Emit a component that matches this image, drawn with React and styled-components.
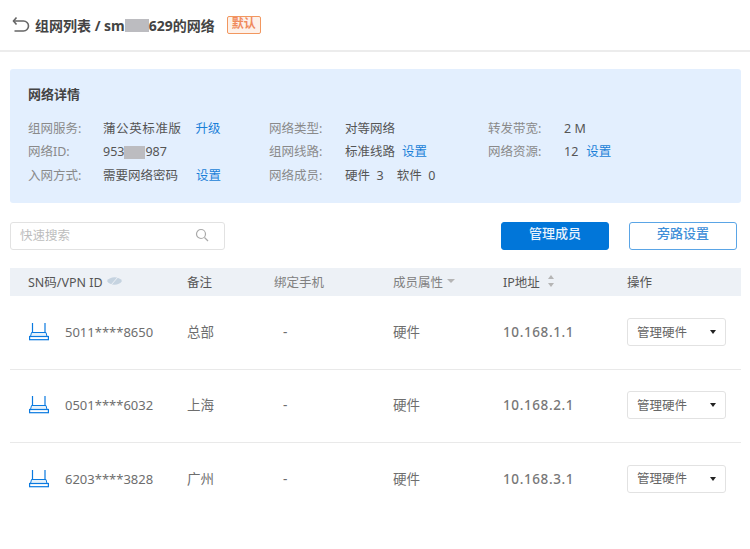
import React from "react";
import styled, { createGlobalStyle } from "styled-components";

const Global = createGlobalStyle`
  html, body {
    margin: 0;
    padding: 0;
    background: #fff;
  }
  body {
    font-family: "Noto Sans", "Noto Sans CJK SC", sans-serif;
    font-size: 13px;
    color: #666;
  }
`;

const Page = styled.div`
  width: 750px;
  height: 549px;
  overflow: hidden;
`;

const Header = styled.header`
  height: 50px;
  box-sizing: content-box;
  display: flex;
  align-items: center;
  padding-left: 12px;
  border-bottom: 2px solid #ececec;
`;

const BackButton = styled.svg`
  width: 18px;
  height: 18px;
  margin-right: 5px;
  margin-top: -2px;
`;

const Title = styled.h1`
  margin: 0;
  font-size: 14px;
  font-weight: 700;
  color: #444;
  display: flex;
  align-items: center;
`;

const Masked = styled.span`
  display: inline-block;
  width: ${(p) => p.$w}px;
  height: 13px;
  background: #bcbcc0;
`;

const Badge = styled.span`
  margin-left: 12px;
  padding: 0 4px;
  height: 16px;
  line-height: 14px;
  font-size: 12px;
  font-weight: 700;
  color: #f08a5d;
  background: #fdf1ea;
  border: 1px solid #f2975f;
  border-radius: 2px;
`;

const Panel = styled.section`
  margin: 17px 9px 0 10px;
  height: 134px;
  box-sizing: border-box;
  padding: 15px 18px 0;
  background: #e3effe;
  border-radius: 3px;
`;

const PanelTitle = styled.h2`
  margin: 0 0 13px;
  font-size: 13px;
  line-height: 20px;
  font-weight: 700;
  color: #444;
`;

const InfoGrid = styled.div`
  display: grid;
  grid-template-columns: 241px 219px 1fr;
  grid-auto-rows: 23.5px;
`;

const Info = styled.div`
  display: flex;
  align-items: center;
  line-height: 20px;
`;

const Label = styled.span`
  width: ${(p) => p.$w || 75}px;
  color: #8a8a8a;
  font-size: 12.5px;
  flex: none;
`;

const Value = styled.span`
  color: #555;
  font-size: 12.5px;
  display: flex;
  align-items: center;
  white-space: pre;
  letter-spacing: ${(p) => p.$spread || 0}px;
`;

const LinkText = styled.a`
  margin-left: ${(p) => p.$gap}px;
  color: #1a7fd8;
  font-size: 12.5px;
  letter-spacing: 0;
`;

const Toolbar = styled.div`
  display: flex;
  align-items: center;
  margin: 19px 13px 0 10px;
`;

const Search = styled.div`
  width: 215px;
  height: 28px;
  box-sizing: border-box;
  display: flex;
  align-items: center;
  justify-content: space-between;
  padding: 0 15px 3px 9px;
  border: 1px solid #e2e2e2;
  border-radius: 3px;
  color: #bdbdbd;
  font-size: 12.5px;
  margin-right: auto;
`;

const Button = styled.button`
  width: 108px;
  height: 28px;
  margin-left: 20px;
  padding: 0 0 7px;
  font-family: inherit;
  font-size: 13px;
  font-weight: 500;
  border-radius: 3px;
  border: ${(p) => (p.$primary ? "1px solid #0176d9" : "1.5px solid #5aa5e6")};
  color: ${(p) => (p.$primary ? "#e8f3fd" : "#3f8fd8")};
  background: ${(p) => (p.$primary ? "#0176d9" : "#fff")};
`;

const Table = styled.div`
  margin: 18px 9px 0 10px;
`;

const columns = "159px 87px 119px 110px 124px 1fr";

const HeadRow = styled.div`
  display: grid;
  grid-template-columns: ${columns};
  height: 26px;
  padding: 0 0 2px 18px;
  align-items: center;
  background: #edf1f6;
  color: #666;
  font-size: 12.5px;
`;

const HeadCell = styled.div`
  display: flex;
  align-items: center;
  gap: 4px;
  color: ${(p) => (p.$muted ? "#808080" : "#555")};
`;

const Rows = styled.div`
  padding-top: 1px;
`;

const Row = styled.div`
  display: grid;
  grid-template-columns: ${columns};
  height: 73px;
  box-sizing: border-box;
  padding: 0 0 2px 18px;
  align-items: center;
  border-bottom: ${(p) => (p.$last ? "none" : "1px solid #e9e9e9")};
  font-size: 13.5px;
  color: #6e6e6e;
`;

const SnCell = styled.div`
  display: flex;
  align-items: center;
  gap: 16px;
  font-size: 13px;
`;

const RouterSvg = styled.svg`
  margin-left: 1px;
  flex: none;
`;

const TextCell = styled.div`
  padding-bottom: 2px;
`;

const DashCell = styled.div`
  padding-left: 9px;
`;

const IpCell = styled.div`
  font-weight: 500;
  font-size: 13.5px;
  letter-spacing: 0.6px;
  color: #777;
`;

const Select = styled.div`
  width: 99px;
  height: 28px;
  box-sizing: border-box;
  display: flex;
  align-items: center;
  justify-content: space-between;
  padding: 0 9px 2px;
  border: 1px solid #e2e2e2;
  border-radius: 3px;
  background: #fff;
  font-size: 12.5px;
  color: #666;
`;

const Caret = styled.i`
  width: 0;
  height: 0;
  margin-top: 2px;
  border-left: 3px solid transparent;
  border-right: 3px solid transparent;
  border-top: 4px solid #222;
`;

const RouterIcon = () => (
  <RouterSvg width="20" height="18" viewBox="0 0 20 18" fill="none">
    <path d="M3.5 0v9.5M16 0v9.5" stroke="#0a7ae0" strokeWidth="1.2" />
    <path d="M2.5 9.5h14.5l1 4H1.5z" fill="#e6f2fb" stroke="#0a7ae0" strokeWidth="1" />
    <rect x="0.6" y="13.5" width="18.8" height="3.2" fill="#fff" stroke="#0a7ae0" strokeWidth="1.2" />
  </RouterSvg>
);

const rows = [
  { sn: "5011****8650", note: "总部", ip: "10.168.1.1" },
  { sn: "0501****6032", note: "上海", ip: "10.168.2.1" },
  { sn: "6203****3828", note: "广州", ip: "10.168.3.1" },
];

export default function App() {
  return (
    <Page>
      <Global />
      <Header>
        <BackButton viewBox="0 0 18 18" fill="none" stroke="#666" strokeWidth="1.6">
          <path d="M4.5 2.5 1.5 6l3 3.5" />
          <path d="M1.5 6H11.5a4.5 4.5 0 0 1 0 10H2.5" />
        </BackButton>
        <Title>
          组网列表 / sm<Masked $w={24} />629的网络
          <Badge>默认</Badge>
        </Title>
      </Header>

      <Panel>
        <PanelTitle>网络详情</PanelTitle>
        <InfoGrid>
          <Info>
            <Label>组网服务:</Label>
            <Value $spread={0.6}>蒲公英标准版<LinkText $gap={14}>升级</LinkText></Value>
          </Info>
          <Info>
            <Label $w={76}>网络类型:</Label>
            <Value>对等网络</Value>
          </Info>
          <Info>
            <Label $w={76}>转发带宽:</Label>
            <Value>2 M</Value>
          </Info>
          <Info>
            <Label>网络ID:</Label>
            <Value>953<Masked $w={21} />987</Value>
          </Info>
          <Info>
            <Label $w={76}>组网线路:</Label>
            <Value>标准线路<LinkText $gap={7}>设置</LinkText></Value>
          </Info>
          <Info>
            <Label $w={76}>网络资源:</Label>
            <Value>12<LinkText $gap={8}>设置</LinkText></Value>
          </Info>
          <Info>
            <Label>入网方式:</Label>
            <Value>需要网络密码<LinkText $gap={18}>设置</LinkText></Value>
          </Info>
          <Info>
            <Label $w={76}>网络成员:</Label>
            <Value>硬件  3    软件  0</Value>
          </Info>
        </InfoGrid>
      </Panel>

      <Toolbar>
        <Search>
          快速搜索
          <svg width="14" height="14" viewBox="0 0 14 14" fill="none" stroke="#aaa" strokeWidth="1.2">
            <circle cx="6" cy="6" r="4.5" />
            <path d="m9.5 9.5 3.5 3.5" />
          </svg>
        </Search>
        <Button $primary>管理成员</Button>
        <Button>旁路设置</Button>
      </Toolbar>

      <Table>
        <HeadRow>
          <HeadCell>
            SN码/VPN ID
            <svg width="15" height="10" viewBox="0 0 15 10">
              <path d="M0 5c3-5 12-5 15 0-3 5-12 5-15 0z" fill="#c5d3e0" />
              <path d="M4 9 11 1" stroke="#edf1f6" strokeWidth="1" />
            </svg>
          </HeadCell>
          <HeadCell>备注</HeadCell>
          <HeadCell $muted>绑定手机</HeadCell>
          <HeadCell $muted>
            成员属性
            <svg width="8" height="6" viewBox="0 0 8 6">
              <path d="M0 1h8L4 5z" fill="#b5b5b5" />
            </svg>
          </HeadCell>
          <HeadCell>
            IP地址
            <svg width="8" height="12" viewBox="0 0 8 12" style={{ marginLeft: 3 }}>
              <path d="M4 0l3 4H1zM4 12 1 8h6z" fill="#b5b5b5" />
            </svg>
          </HeadCell>
          <HeadCell>操作</HeadCell>
        </HeadRow>
        <Rows>
          {rows.map((r, i) => (
            <Row key={r.sn} $last={i === rows.length - 1}>
              <SnCell>
                <RouterIcon />
                {r.sn}
              </SnCell>
              <TextCell>{r.note}</TextCell>
              <DashCell>-</DashCell>
              <TextCell>硬件</TextCell>
              <IpCell>{r.ip}</IpCell>
              <Select>
                管理硬件
                <Caret />
              </Select>
            </Row>
          ))}
        </Rows>
      </Table>
    </Page>
  );
}
